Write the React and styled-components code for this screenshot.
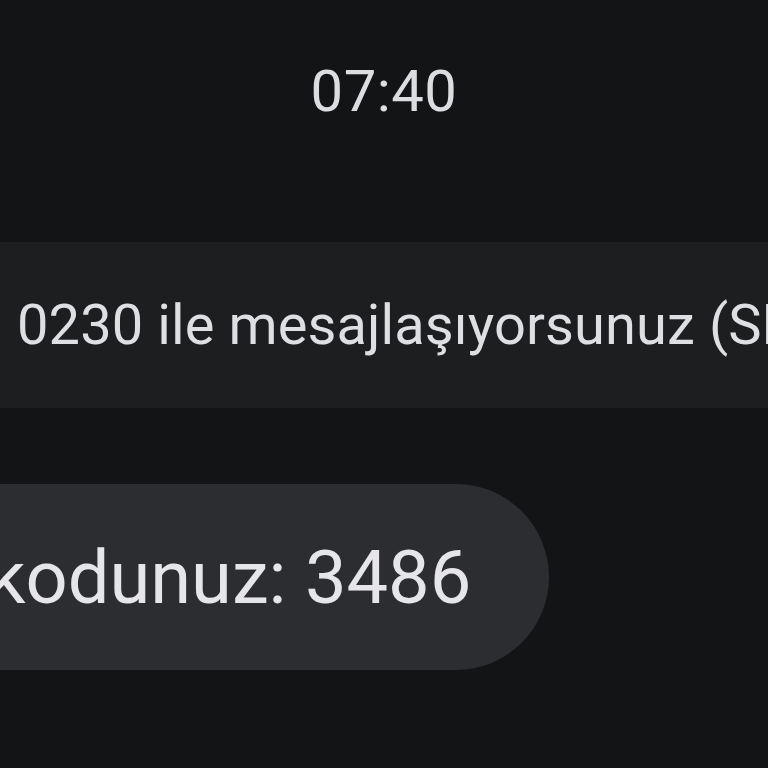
import React from "react";
import styled, { createGlobalStyle } from "styled-components";

const Global = createGlobalStyle`
  html, body { margin: 0; padding: 0; background: #131416; }
  body { font-family: Roboto, "Noto Sans", sans-serif; color: #e3e3e6; overflow: hidden; }
`;

const Screen = styled.div`
  width: 768px;
  height: 768px;
  background: #131416;
  display: flex;
  flex-direction: column;
  overflow: hidden;
`;

const TimeRow = styled.div`
  height: 242px;
  display: flex;
  justify-content: center;
  padding-top: 51px;
  box-sizing: border-box;
`;

const Time = styled.div`
  font-size: 58px;
  line-height: 80px;
  height: 80px;
  color: #dcdde0;
  letter-spacing: 0.5px;
`;

const Banner = styled.div`
  height: 166px;
  background: #1d1e20;
  display: flex;
  align-items: center;
  padding-left: 17px;
  white-space: nowrap;
  overflow: hidden;
  font-size: 56px;
  letter-spacing: 0.1px;
  color: #dedfe2;
`;

const Thread = styled.div`
  padding-top: 76px;
  display: flex;
`;

const Bubble = styled.div`
  margin-left: -12px;
  height: 186px;
  border-radius: 0 93px 93px 0;
  background: #2c2d30;
  display: flex;
  align-items: center;
  padding: 0 78px 0 0;
  font-size: 74px;
  color: #e6e6ea;
  white-space: nowrap;
`;

export default function App() {
  return (
    <>
      <Global />
      <Screen>
        <TimeRow>
          <Time>07:40</Time>
        </TimeRow>
        <Banner>0230 ile mesajlaşıyorsunuz (SMS)</Banner>
        <Thread>
          <Bubble>kodunuz: 3486</Bubble>
        </Thread>
      </Screen>
    </>
  );
}
